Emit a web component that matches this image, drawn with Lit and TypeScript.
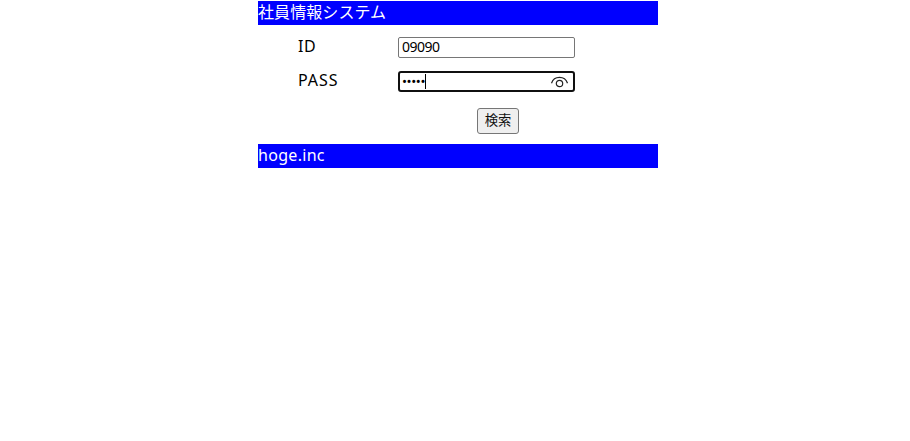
import { LitElement, html, css } from "lit";
import { customElement } from "lit/decorators.js";

@customElement("app-root")
export class AppRoot extends LitElement {
  static styles = css`
    :host {
      display: block;
      box-sizing: border-box;
      height: 441px;
      padding: 1px 0 0 258px;
      background: #fff;
      color: #000;
      font: 16px/24px "Noto Sans", "Noto Sans CJK JP", sans-serif;
    }
    .panel { width: 400px; }
    .bar { height: 24px; background: #00f; color: #fff; }
    .title { line-height: 22px; letter-spacing: 0.08px; }
    .company { line-height: 23px; letter-spacing: 0.3px; }
    .form { display: flex; flex-direction: column; height: 119px; box-sizing: border-box; padding: 12px 0 0 40px; }
    .row { display: grid; grid-template-columns: 100px 177px; height: 21px; margin-bottom: 13px; }
    .label { line-height: 19px; letter-spacing: 0.6px; }
    .pass { letter-spacing: 0.95px; }
    .field {
      box-sizing: border-box;
      display: flex;
      align-items: center;
      height: 21px;
      padding: 0 3px 1px;
      border: 1px solid #767676;
      border-radius: 2px;
      font-size: 14px;
      line-height: 18px;
      letter-spacing: -0.5px;
    }
    .focused { border: 2px solid #101010; border-radius: 3px; padding: 0 5px 0 2px; font-size: 13.333px; line-height: 19px; letter-spacing: -0.4px; }
    .caret { width: 1px; height: 15px; background: #000; }
    .eye { margin-left: auto; display: block; }
    .search {
      box-sizing: border-box;
      width: 42px;
      height: 26px;
      margin: 3px 0 0 179px;
      padding: 0 0 2px;
      border: 1px solid #767676;
      border-radius: 3px;
      background: #efefef;
      color: #111;
      font: 13.333px/20px "Noto Sans CJK JP", sans-serif;
    }
  `;

  render() {
    return html`
      <main class="panel">
        <header class="bar title">社員情報システム</header>
        <section class="form">
          <div class="row">
            <span class="label">ID</span>
            <div class="field">09090</div>
          </div>
          <div class="row">
            <span class="label pass">PASS</span>
            <div class="field focused">
              <span>•••••</span><span class="caret"></span>
              <svg class="eye" width="18" height="14" viewBox="0 0 18 14" fill="none" stroke="#222" stroke-width="1.2">
                <path d="M1.500 8.200C2.700 4.600 5.700 2.300 9.500 2.300S16.300 4.600 17.500 8.200" />
                <circle cx="9.500" cy="8.500" r="3.200" />
              </svg>
            </div>
          </div>
          <button class="search">検索</button>
        </section>
        <footer class="bar company">hoge.inc</footer>
      </main>
    `;
  }
}
